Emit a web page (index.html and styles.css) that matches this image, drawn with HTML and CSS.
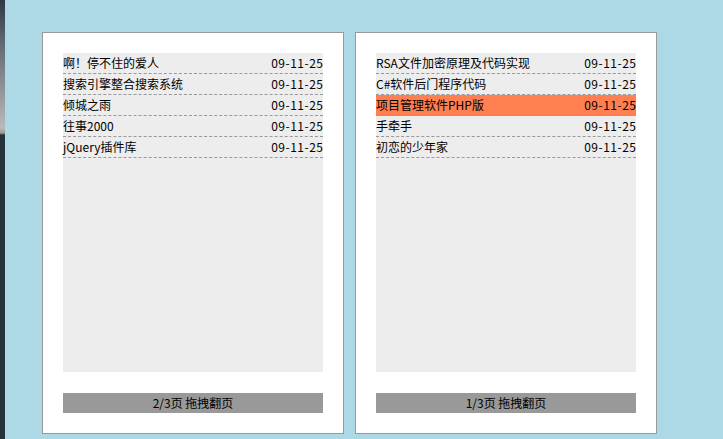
FILE: index.html
```html
<!DOCTYPE html>
<html lang="zh-CN">
<head>
  <meta charset="UTF-8">
  <title>拖拽翻页</title>
  <link rel="stylesheet" href="styles.css">
</head>
<body>
  <div class="edge"></div>
  <div class="wrap">
    <div class="box">
      <ul class="list">
        <li><span>啊！停不住的爱人</span><em>09-11-25</em></li>
        <li><span>搜索引擎整合搜索系统</span><em>09-11-25</em></li>
        <li><span>倾城之雨</span><em>09-11-25</em></li>
        <li><span>往事2000</span><em>09-11-25</em></li>
        <li><span>jQuery插件库</span><em>09-11-25</em></li>
      </ul>
      <div class="pager">2/3页 拖拽翻页</div>
    </div>
    <div class="box">
      <ul class="list">
        <li><span>RSA文件加密原理及代码实现</span><em>09-11-25</em></li>
        <li><span>C#软件后门程序代码</span><em>09-11-25</em></li>
        <li class="on"><span>项目管理软件PHP版</span><em>09-11-25</em></li>
        <li><span>手牵手</span><em>09-11-25</em></li>
        <li><span>初恋的少年家</span><em>09-11-25</em></li>
      </ul>
      <div class="pager">1/3页 拖拽翻页</div>
    </div>
  </div>
</body>
</html>
```

FILE: styles.css
```css
html, body {
  height: 100%;
}
body {
  margin: 0;
  background: #add8e6;
  font-family: "Microsoft YaHei", "Noto Sans CJK SC", sans-serif;
  font-size: 12px;
  color: #000;
  display: flex;
  overflow: hidden;
}
.edge {
  width: 5px;
  flex: none;
  background: linear-gradient(#2e3944 0, #5d6670 40px, #b9b9b9 128px, #9a9a9a 133px, #25313b 135px, #25313b 100%);
}
.wrap {
  display: flex;
  align-items: flex-start;
  gap: 11px;
  padding: 32px 0 0 37px;
}
.box {
  width: 260px;
  height: 360px;
  padding: 20px;
  background: #fff;
  border: 1px solid #999;
  display: flex;
  flex-direction: column;
}
.list {
  list-style: none;
  margin: 0;
  padding: 0;
  height: 320px;
  background: #ededed;
}
.list li {
  height: 20px;
  line-height: 20px;
  border-bottom: 1px dashed #999;
  display: flex;
  justify-content: space-between;
}
.list li em {
  font-style: normal;
  letter-spacing: 0.5px;
  margin-right: -0.5px;
}
.list li.on {
  background: #ff7f50;
}
.pager {
  margin-top: 21px;
  height: 20px;
  line-height: 20px;
  background: #999;
  text-align: center;
}
```
